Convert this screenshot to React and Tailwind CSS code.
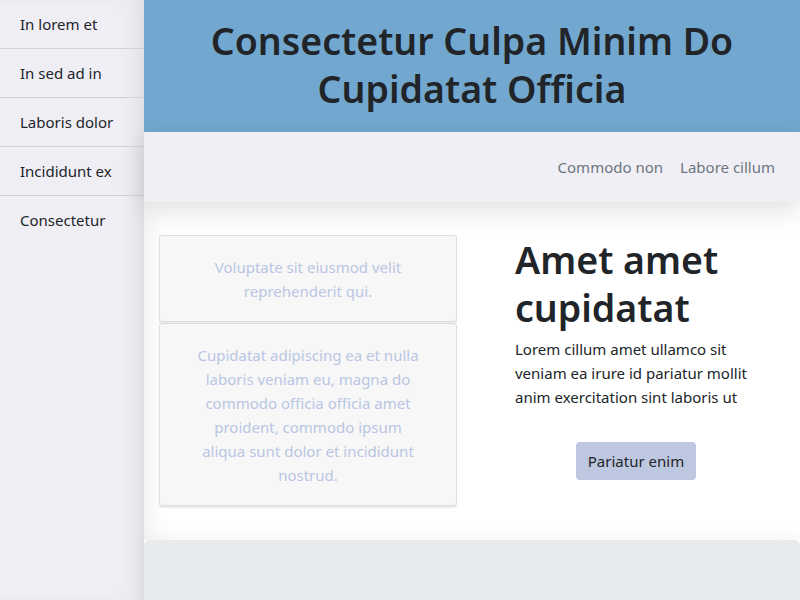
export default function App() {
  const side = ["In lorem et", "In sed ad in", "Laboris dolor", "Incididunt ex", "Consectetur"];
  return (
    <div className="flex min-h-[600px] w-full text-[#212529]" style={{ fontFamily: '"Noto Sans", "Open Sans", sans-serif' }}>
      <aside className="w-[144px] shrink-0 bg-[#f0eef5] shadow-[inset_-14px_0_22px_-12px_rgba(0,0,0,0.1)]">
        {side.map((s, i) => (
          <div key={s} className={"h-[49px] px-5 flex items-center text-[15px] " + (i < 4 ? "border-b border-[#d2d0d8]" : "")}>
            {s}
          </div>
        ))}
      </aside>
      <div className="flex-1 flex flex-col">
        <header className="bg-[#72a8cf] h-[132px] flex items-center justify-center px-6 pb-[3px]">
          <h1 className="text-[37.5px] leading-[48px] font-semibold text-center">Consectetur Culpa Minim Do Cupidatat Officia</h1>
        </header>
        <nav className="relative z-10 h-[70px] bg-[#f1eff6] flex items-center justify-end gap-[17px] pr-[25px] text-[15px] text-[#6c757d] shadow-[0_8px_28px_rgba(0,0,0,0.12)]">
          <a>Commodo non</a>
          <a>Labore cillum</a>
        </nav>
        <main className="grid grid-cols-2 bg-white pt-[33px] pb-[34px] shadow-[inset_18px_0_24px_-14px_rgba(0,0,0,0.08)]">
          <div className="px-[15px] flex flex-col gap-px">
            <div className="bg-[#f7f7f7] border border-[#dedede] rounded-[3px] shadow-[0_2px_1px_rgba(0,0,0,0.08)] px-9 py-[18.5px] text-center text-[15px] leading-6 text-[#b9c6e4]">
              Voluptate sit eiusmod velit reprehenderit qui.
            </div>
            <div className="bg-[#f7f7f7] border border-[#dedede] rounded-[3px] shadow-[0_2px_1px_rgba(0,0,0,0.08)] px-9 py-[18.5px] text-center text-[15px] leading-6 text-[#b9c6e4]">
              Cupidatat adipiscing ea et nulla laboris veniam eu, magna do commodo officia officia amet proident, commodo ipsum aliqua sunt dolor et incididunt nostrud.
            </div>
          </div>
          <div className="px-[43px] flex flex-col">
            <h2 className="text-[37.5px] leading-[48px] font-semibold mt-[1px]">Amet amet cupidatat</h2>
            <p className="mt-[5px] text-[15px] leading-6">Lorem cillum amet ullamco sit veniam ea irure id pariatur mollit anim exercitation sint laboris ut</p>
            <div className="mt-[33px] flex justify-center">
              <button className="bg-[#bdc8e0] rounded-[4px] px-3 py-[7px] text-[15px] leading-6">Pariatur enim</button>
            </div>
          </div>
        </main>
        <footer className="flex-1 min-h-[60px] bg-[#e8ebee] rounded-t-[6px] shadow-[0_-6px_20px_rgba(0,0,0,0.03)]"></footer>
      </div>
    </div>
  );
}
